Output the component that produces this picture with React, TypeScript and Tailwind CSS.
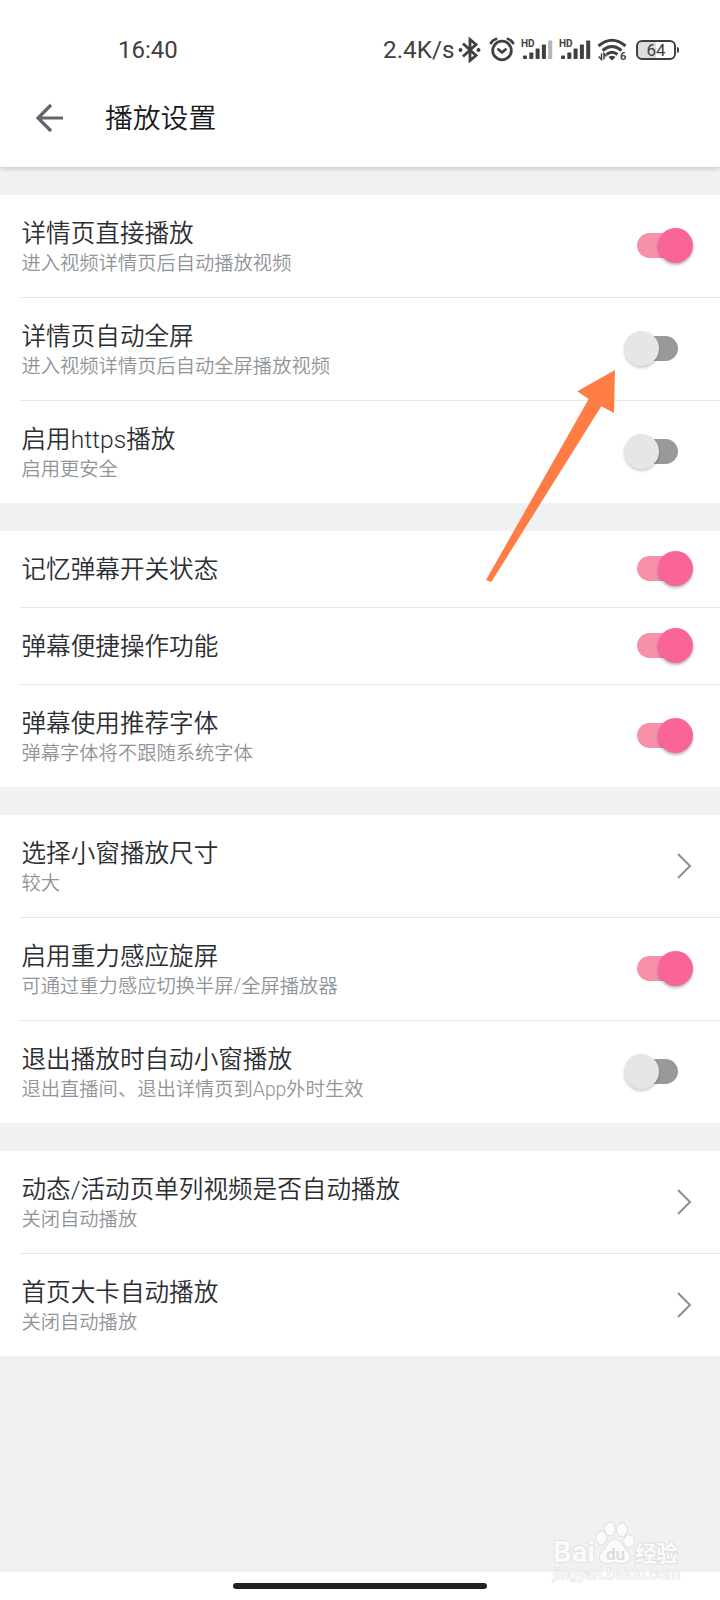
import React from 'react';

type Item = {
  title: string;
  desc?: string;
  control: 'on' | 'off' | 'link';
};

const groups: Item[][] = [
  [
    { title: '详情页直接播放', desc: '进入视频详情页后自动播放视频', control: 'on' },
    { title: '详情页自动全屏', desc: '进入视频详情页后自动全屏播放视频', control: 'off' },
    { title: '启用https播放', desc: '启用更安全', control: 'off' },
  ],
  [
    { title: '记忆弹幕开关状态', control: 'on' },
    { title: '弹幕便捷操作功能', control: 'on' },
    { title: '弹幕使用推荐字体', desc: '弹幕字体将不跟随系统字体', control: 'on' },
  ],
  [
    { title: '选择小窗播放尺寸', desc: '较大', control: 'link' },
    { title: '启用重力感应旋屏', desc: '可通过重力感应切换半屏/全屏播放器', control: 'on' },
    { title: '退出播放时自动小窗播放', desc: '退出直播间、退出详情页到App外时生效', control: 'off' },
  ],
  [
    { title: '动态/活动页单列视频是否自动播放', desc: '关闭自动播放', control: 'link' },
    { title: '首页大卡自动播放', desc: '关闭自动播放', control: 'link' },
  ],
];

function Signal({ weak }: { weak?: boolean }) {
  return (
    <svg width="32" height="24" viewBox="0 0 32 24" fill="#404040">
      <text x="0" y="9" fontSize="10" fontWeight="700" className="font-['Roboto',sans-serif]">HD</text>
      <rect x="2" y="17.5" width="4" height="3.5" rx="0.8" />
      <rect x="8.3" y="14.5" width="4" height="6.5" rx="0.8" />
      <rect x="14.6" y="10.5" width="4" height="10.5" rx="0.8" />
      <rect x="20.9" y="6.5" width="4" height="14.5" rx="0.8" />
      <rect x="27.2" y="2.5" width="4" height="18.5" rx="0.8" fill={weak ? '#b5b5b5' : '#404040'} />
    </svg>
  );
}

function StatusBar() {
  return (
    <div className="flex h-[67px] items-center pt-8 pl-[118px] text-[#404040]">
      <span className="w-[60px] text-2xl leading-9">16:40</span>
      <span className="ml-[205px] w-[72px] text-[24.3px] leading-9">2.4K/s</span>
      <svg className="ml-[3px]" width="24" height="26" viewBox="0 0 24 26" fill="none" stroke="#404040" strokeWidth="2.8">
        <path d="M5 6.5 L18 18.5 L12 23.5 V2.5 L18 7.5 L5 19.5" />
        <circle cx="2.5" cy="13" r="2" fill="#404040" stroke="none" />
        <circle cx="20.5" cy="13" r="2" fill="#404040" stroke="none" />
      </svg>
      <svg className="ml-[7px]" width="26" height="26" viewBox="0 0 26 26" fill="none" stroke="#404040" strokeWidth="2.8" strokeLinecap="round">
        <circle cx="13" cy="13.5" r="9.3" />
        <path d="M2 6 Q3.5 3 7 2 M24 6 Q22.5 3 19 2 M9.5 12.5 L13 15.5 L16.5 12.5" />
      </svg>
      <div className="ml-[6px] flex gap-[6px]">
        <Signal weak />
        <Signal />
      </div>
      <svg className="ml-[6px]" width="30" height="24" viewBox="0 0 30 24" fill="none" stroke="#404040" strokeWidth="3">
        <path d="M1.5 8 Q15 -3.5 28.5 8" />
        <path d="M5.5 12.5 Q15 4.5 24.5 12.5" />
        <path d="M9.5 16.5 Q15 12 20.5 16.5" />
        <path d="M11.5 19 Q15 16.5 18.5 19 L15 22.5 Z" fill="#404040" stroke="none" />
        <path d="M4.5 15.5 V21.5 L1.5 18.5 M7 21.5 V15.5 L9.5 18.5" strokeWidth="1.5" />
        <text x="23" y="22" fontSize="11" fontWeight="700" fill="#404040" stroke="none" className="font-['Roboto',sans-serif]">6</text>
      </svg>
      <div className="ml-[9px] flex items-center">
        <div className="flex h-5 w-10 items-center justify-center rounded-[6px] border-2 border-[#404040] bg-linear-to-r from-[#dcdcdc] from-50% to-white to-50% text-[17px] leading-4">
          64
        </div>
        <div className="ml-px h-[6px] w-[2px] rounded-r bg-[#404040]" />
      </div>
    </div>
  );
}

function Toggle({ on }: { on: boolean }) {
  return (
    <div className="relative mb-px flex h-[35px] w-[70px] shrink-0 items-center justify-center">
      <div className={`h-[25px] w-[41px] rounded-full ${on ? 'bg-[#f691a9]' : 'bg-[#999999]'}`} />
      <div
        className={`absolute top-0 size-[35px] rounded-full ${
          on
            ? 'right-0 bg-[#fb6496] shadow-[0_2px_3px_rgba(0,0,0,0.28)]'
            : 'left-px bg-[#e6e6e6] shadow-[0_2px_3px_rgba(0,0,0,0.2)]'
        }`}
      />
    </div>
  );
}

function Chevron() {
  return (
    <svg className="mr-px shrink-0" width="16" height="28" viewBox="0 0 16 28" fill="none" stroke="#8b9094" strokeWidth="2">
      <path d="M2 2 L14 14 L2 26" />
    </svg>
  );
}

function Row({ item, last }: { item: Item; last: boolean }) {
  const height = item.desc ? (last ? 'h-[102px]' : 'h-[103px]') : 'h-[77px]';
  return (
    <div className={`ml-5 flex items-center justify-between pr-[27.5px] ${height} ${last ? '' : 'border-b border-[#e6e7e8]'}`}>
      <div className="pl-[1.5px] font-[350]">
        <div className={`text-[24.6px] leading-[33px] text-[#2b2e32] ${item.desc ? 'pt-0.5' : ''}`}>{item.title}</div>
        {item.desc && <div className="text-[19.3px] leading-[27px] text-[#8f9499]">{item.desc}</div>}
      </div>
      {item.control === 'link' ? <Chevron /> : <Toggle on={item.control === 'on'} />}
    </div>
  );
}

function Watermark() {
  return (
    <svg
      className="absolute top-[1518px] left-[548px]"
      width="140"
      height="70"
      viewBox="0 0 140 70"
      fill="#fbfbfc"
      stroke="#dcdddf"
      strokeWidth="1.6"
      paintOrder="stroke"
    >
      <text x="5" y="44" fontSize="29" fontWeight="700" textLength="42" className="font-['Roboto',sans-serif]">Bai</text>
      <ellipse cx="53.5" cy="20" rx="5" ry="6.5" />
      <ellipse cx="62" cy="11" rx="5" ry="6.5" />
      <ellipse cx="74" cy="12" rx="5" ry="6.5" />
      <ellipse cx="81" cy="23" rx="5" ry="6" />
      <path d="M67 22 C74 22 74 29 79 33 C84 38 82 45 75 45 C70 45 70 44 67 44 C64 44 62 45 58 45 C51 45 50 38 55 33 C60 29 60 22 67 22 Z" />
      <text x="58" y="42" fontSize="17" fontWeight="700" textLength="19" fill="#dcdddf" stroke="none" className="font-['Roboto',sans-serif]">du</text>
      <text x="87" y="43" fontSize="22" fontWeight="700" textLength="43" className="font-['Noto_Sans_CJK_SC',sans-serif]">经验</text>
      <text x="5" y="61" fontSize="15.5" textLength="127" strokeWidth="1.2" className="font-['Roboto',sans-serif]">jingyan.baidu.com</text>
    </svg>
  );
}

export default function App() {
  return (
    <div className="relative flex h-[1600px] w-[720px] flex-col overflow-hidden bg-[#eff1f3] font-['Roboto','Noto_Sans_CJK_SC',sans-serif]">
      <header className="z-10 h-[167px] shrink-0 bg-white shadow-[0_1px_5px_rgba(0,0,0,0.22)]">
        <StatusBar />
        <div className="flex h-[100px] items-center pl-[34px]">
          <svg width="32" height="32" viewBox="0 0 32 32" fill="none" stroke="#60666b" strokeWidth="3.2">
            <path d="M29 17 H4 M17 4 L4 17 L17 30" />
          </svg>
          <h1 className="ml-[39px] pt-1 text-[27.8px] leading-10 font-[350] text-[#18191c]">播放设置</h1>
        </div>
      </header>

      <main className="flex flex-1 flex-col gap-7 pt-7">
        {groups.map((items, i) => (
          <section key={i} className="bg-white">
            {items.map((item, j) => (
              <Row key={item.title} item={item} last={j === items.length - 1} />
            ))}
          </section>
        ))}
      </main>

      <div className="flex h-7 items-center justify-center bg-white">
        <div className="h-[6px] w-[254px] rounded-full bg-[#222222]" />
      </div>

      <svg className="absolute top-[365px] left-[480px]" width="140" height="222" viewBox="480 365 140 222" fill="#ff7c45">
        <path d="M615 370 L577.3 391.3 L588.7 399 L486 580 L491.3 582 L601.3 406.3 L614 413 Z" />
      </svg>
      <Watermark />
    </div>
  );
}
